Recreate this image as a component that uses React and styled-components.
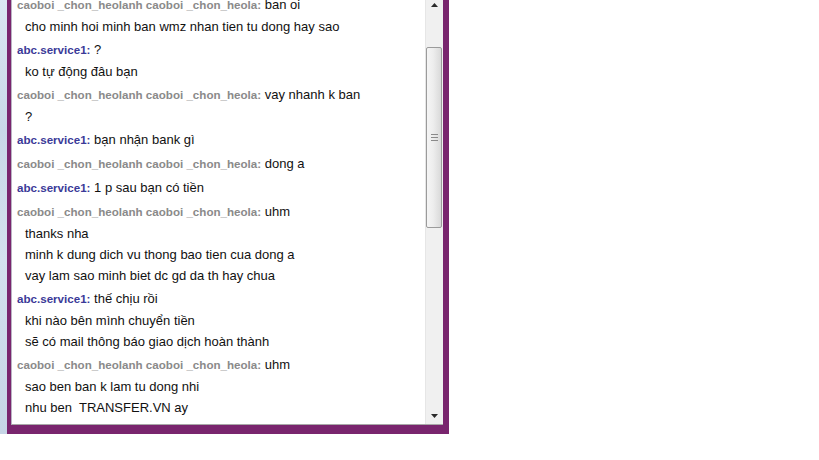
import React from 'react';
import styled, { createGlobalStyle } from 'styled-components';

const Global = createGlobalStyle`
  html, body {
    margin: 0;
    background: #ffffff;
  }
`;

const Frame = styled.div`
  display: flex;
  width: 449px;
  height: 434px;
  overflow: hidden;
`;

const Edge = styled.div`
  width: 7px;
  flex: none;
  background: linear-gradient(180deg, #dbe6f2 0%, #c9d8e8 30%, #d4e0ee 60%, #c6d5e6 100%);
`;

const Window = styled.div`
  flex: 1;
  display: flex;
  flex-direction: column;
  background: #79256e;
  padding: 0 6px 9px 4px;
`;

const Panel = styled.div`
  flex: 1;
  display: flex;
  background: #ffffff;
  border-left: 1px solid #b9b4c4;
  border-bottom: 1px solid #a8a8a8;
  min-height: 0;
`;

const Log = styled.div`
  flex: 1;
  overflow: hidden;
  padding-left: 5px;
  font-family: "Liberation Sans", Arial, sans-serif;
  color: #111111;
`;

// the log is scrolled a little, so the first row is partly hidden
const List = styled.div`
  margin-top: -6px;
`;

const Block = styled.div`
  margin-bottom: 2px;
`;

const Head = styled.div`
  height: 22px;
  line-height: 22px;
  font-size: 13px;
  white-space: pre;
`;

const Name = styled.span`
  font-size: 11.6px;
  font-weight: bold;
  color: ${p => (p.$staff ? '#3b3a98' : '#8a8a8a')};
`;

const Line = styled.div`
  height: 21px;
  line-height: 21px;
  font-size: 13px;
  padding-left: 8px;
  white-space: pre;
`;

const Scroll = styled.div`
  width: 17px;
  flex: none;
  display: flex;
  flex-direction: column;
  background: #f0f0f0;
  border-left: 1px solid #e6e6e6;
`;

const Arrow = styled.div`
  height: ${p => p.$h}px;
  flex: none;
  display: flex;
  justify-content: center;
  align-items: ${p => (p.$up ? 'flex-start' : 'center')};
  padding-top: ${p => (p.$up ? 3 : 0)}px;
  box-sizing: border-box;
`;

const Track = styled.div`
  flex: 1;
  padding-top: ${p => p.$top}px;
`;

const Thumb = styled.div`
  height: 181px;
  margin: 0 1px 0 0;
  box-sizing: border-box;
  border: 1px solid #9b9b9b;
  border-radius: 2px;
  background: linear-gradient(90deg, #f5f5f5 0%, #ededed 45%, #d9d9d9 100%);
  display: flex;
  justify-content: center;
  align-items: center;
`;

const Grip = styled.div`
  width: 7px;
  height: 7px;
  background: repeating-linear-gradient(180deg, #8a8a8a 0 1px, transparent 1px 3px);
`;

const Tri = ({ up }) => (
  <svg width="7" height="4" viewBox="0 0 7 4">
    <polygon points={up ? '3.5,0 7,4 0,4' : '0,0 7,0 3.5,4'} fill="#2a2a2a" />
  </svg>
);

const GUEST = 'caoboi _chon_heolanh caoboi _chon_heola:';
const STAFF = 'abc.service1:';

const messages = [
  { staff: false, first: 'ban oi', rest: ['cho minh hoi minh ban wmz nhan tien tu dong hay sao'] },
  { staff: true, first: '?', rest: ['ko tự động đâu bạn'] },
  { staff: false, first: 'vay nhanh k ban', rest: ['?'] },
  { staff: true, first: 'bạn nhận bank gì' },
  { staff: false, first: 'dong a' },
  { staff: true, first: '1 p sau bạn có tiền' },
  {
    staff: false,
    first: 'uhm',
    rest: ['thanks nha', 'minh k dung dich vu thong bao tien cua dong a', 'vay lam sao minh biet dc gd da th hay chua'],
  },
  { staff: true, first: 'thế chịu rồi', rest: ['khi nào bên mình chuyển tiền', 'sẽ có mail thông báo giao dịch hoàn thành'] },
  {
    staff: false,
    first: 'uhm',
    rest: ['sao ben ban k lam tu dong nhi', 'nhu ben  TRANSFER.VN ay', 'nen minh thay có ve nhanh hon'],
  },
];

export default function App() {
  return (
    <>
      <Global />
      <Frame>
        <Edge />
        <Window>
          <Panel>
            <Log>
              <List>
                {messages.map((m, i) => (
                  <Block key={i}>
                    <Head>
                      <Name $staff={m.staff}>{m.staff ? STAFF : GUEST}</Name> {m.first}
                    </Head>
                    {(m.rest || []).map((t, j) => (
                      <Line key={j}>{t}</Line>
                    ))}
                  </Block>
                ))}
              </List>
            </Log>
            <Scroll>
              <Arrow $up $h={12}><Tri up /></Arrow>
              <Track $top={35}>
                <Thumb><Grip /></Thumb>
              </Track>
              <Arrow $h={17}><Tri /></Arrow>
            </Scroll>
          </Panel>
        </Window>
      </Frame>
    </>
  );
}
